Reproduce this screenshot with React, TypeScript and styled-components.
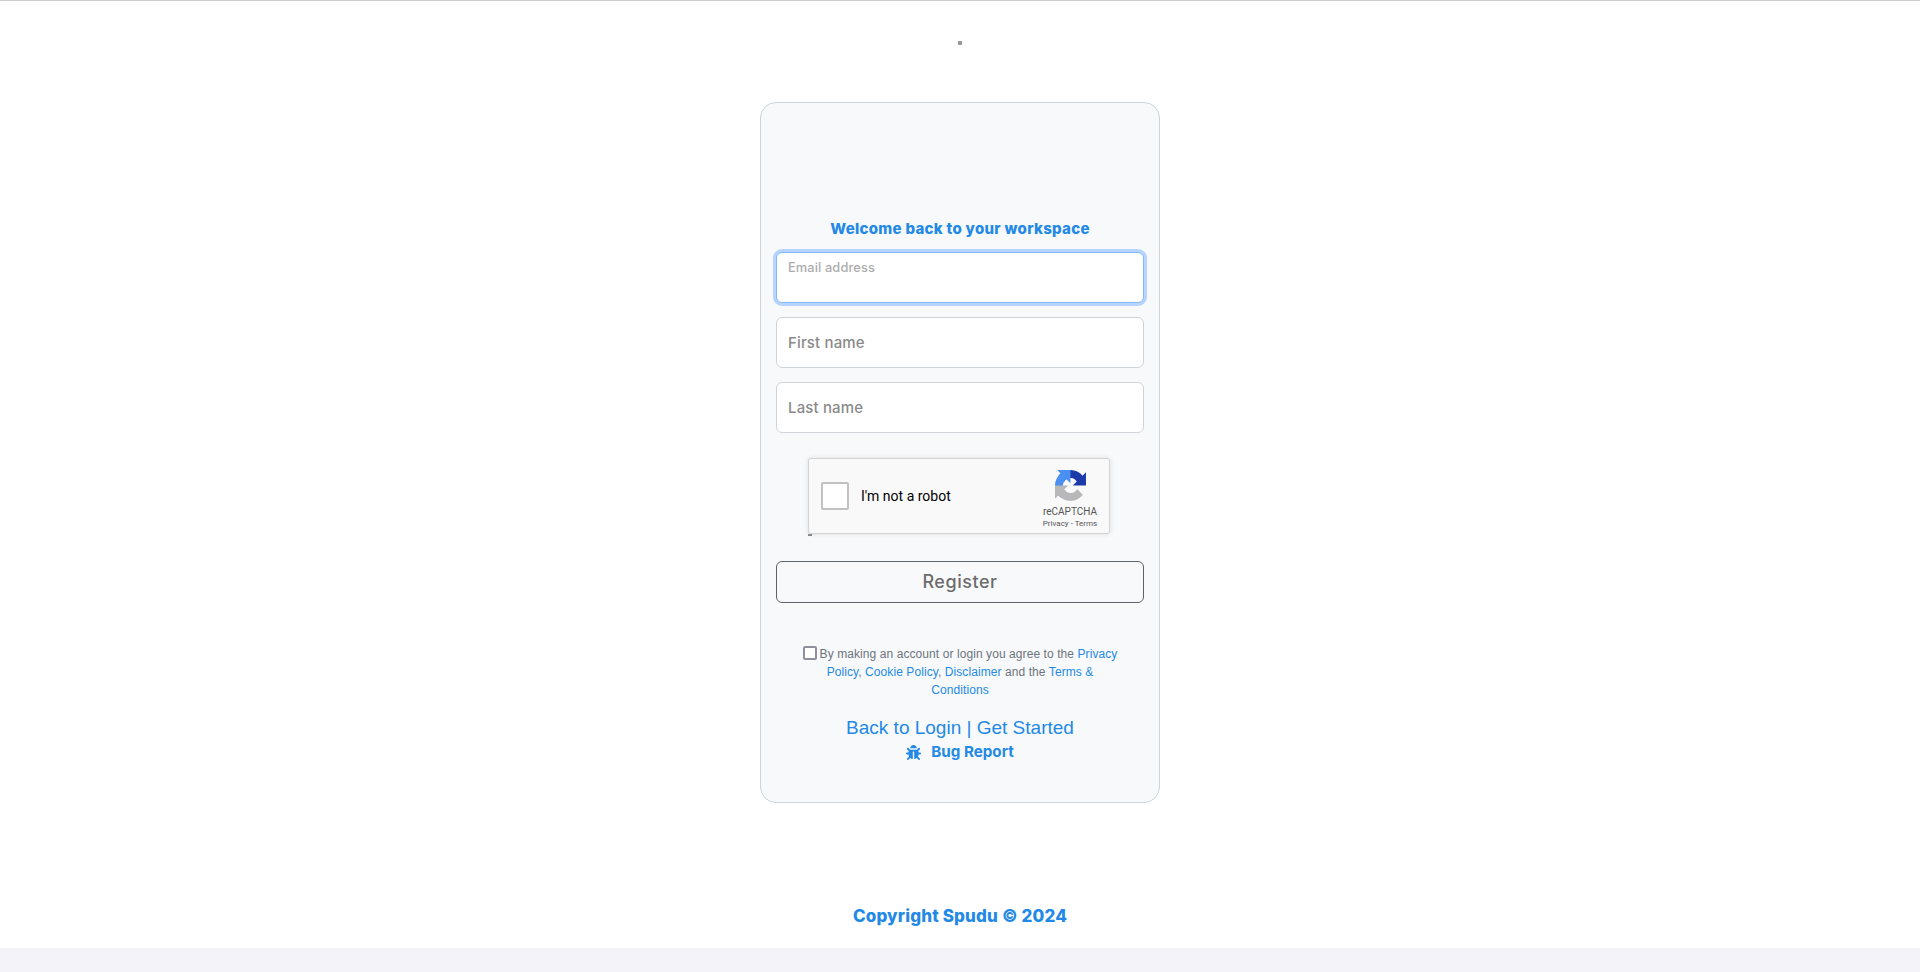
import React from "react";
import styled, { createGlobalStyle } from "styled-components";
import { FaBug } from "react-icons/fa";

const GlobalStyle = createGlobalStyle`
  html, body {
    margin: 0;
    padding: 0;
    background: #fff;
  }
  * {
    box-sizing: border-box;
  }
`;

const Page = styled.div`
  display: flex;
  flex-direction: column;
  align-items: center;
  height: 972px;
  overflow: hidden;
  border-top: 1px solid #ccc;
  font-family: "Inter", "Liberation Sans", sans-serif;
`;
const Dot = styled.div`
  width: 4px;
  height: 4px;
  margin-top: 40px;
  background: #999;
`;
const Card = styled.main`
  width: 400px;
  height: 701px;
  margin-top: 57px;
  padding: 0 15px;
  display: flex;
  flex-direction: column;
  background: #f8f9fa;
  border: 1px solid #ced4da;
  border-radius: 16px;
`;
const Title = styled.h1`
  margin: 116px 0 0;
  height: 20px;
  font-size: 15px;
  line-height: 20px;
  font-weight: 800;
  letter-spacing: 0.02em;
  text-align: center;
  color: #2389e6;
`;
const Field = styled.div`
  position: relative;
  height: 51px;
  margin-top: 14px;

  &:first-of-type {
    margin-top: 13px;
  }
`;
const Input = styled.input<{ $focused?: boolean }>`
  display: block;
  width: 100%;
  height: 100%;
  border-radius: 6px;
  background: #fff;
  outline: none;
  border: 1px solid ${(p) => (p.$focused ? "#86b7fe" : "#ced4da")};
  box-shadow: ${(p) => (p.$focused ? "0 0 0 3px #b6d4fe" : "none")};
`;
const FloatLabel = styled.label<{ $raised?: boolean }>`
  position: absolute;
  left: 12px;
  top: ${(p) => (p.$raised ? "7px" : "16px")};
  font-size: ${(p) => (p.$raised ? "12.8px" : "15px")};
  line-height: ${(p) => (p.$raised ? "17px" : "20px")};
  font-weight: 500;
  letter-spacing: 0.01em;
  color: ${(p) => (p.$raised ? "#adadad" : "#8a8a8a")};
`;
const Captcha = styled.div`
  position: relative;
  align-self: flex-start;
  width: 302px;
  height: 76px;
  margin: 25px 0 0 32px;
  padding: 0 10px 0 12px;
  display: flex;
  align-items: center;
  background: #f9f9f9;
  border: 1px solid #d3d3d3;
  border-radius: 3px;
  box-shadow: 0 0 4px 1px rgba(0, 0, 0, 0.08);
  font-family: "Roboto", "Liberation Sans", sans-serif;

  &::after {
    content: "";
    position: absolute;
    left: -1px;
    bottom: -3px;
    width: 4px;
    height: 2px;
    background: #888;
  }
`;
const CaptchaBox = styled.div`
  width: 28px;
  height: 28px;
  background: #fff;
  border: 2px solid #c1c1c1;
  border-radius: 2px;
`;
const CaptchaText = styled.span`
  margin-left: 12px;
  flex: 1;
  font-size: 14px;
  color: #000;
`;
const CaptchaBrand = styled.div`
  width: 58px;
  margin-top: 7px;
  display: flex;
  flex-direction: column;
  align-items: center;
  color: #555;
`;
const BrandName = styled.div`
  margin-top: 4px;
  font-size: 10px;
  line-height: 13px;
`;
const BrandLinks = styled.div`
  font-size: 8px;
  line-height: 11px;
  white-space: nowrap;
`;
const RegisterButton = styled.button`
  height: 42px;
  margin-top: 27px;
  padding: 0 0 2px;
  background: transparent;
  border: 1px solid #5c636a;
  border-radius: 6px;
  font-family: inherit;
  font-size: 18px;
  font-weight: 500;
  letter-spacing: 0.03em;
  color: #6c6c6c;
`;
const Terms = styled.p`
  margin: 42px 0 0;
  padding: 0 26px;
  text-align: center;
  font-family: "Liberation Sans", sans-serif;
  font-size: 12px;
  line-height: 18px;
  letter-spacing: 0.08px;
  color: #6c757d;
`;
const TermsCheck = styled.span`
  display: inline-block;
  width: 14px;
  height: 14px;
  margin-right: 3px;
  vertical-align: -2px;
  background: #fff;
  border: 2px solid #8f8f9d;
  border-radius: 2px;
`;
const TextLink = styled.a`
  color: #2389e6;
  text-decoration: none;
`;
const BackLinks = styled.div`
  margin-top: 17px;
  text-align: center;
  font-family: "Liberation Sans", sans-serif;
  font-size: 19px;
  line-height: 24px;
  color: #2389e6;
`;
const BugLink = styled.a`
  margin-top: 1px;
  display: flex;
  align-items: center;
  justify-content: center;
  gap: 10px;
  font-size: 15.2px;
  line-height: 22px;
  font-weight: 700;
  color: #2389e6;

  svg {
    width: 15px;
    height: 15px;
  }
`;
const Copyright = styled.footer`
  margin-top: 102px;
  height: 22px;
  font-size: 17px;
  line-height: 22px;
  font-weight: 800;
  letter-spacing: 0.01em;
  color: #2389e6;
`;
const Band = styled.div`
  width: 100%;
  flex: 1;
  margin-top: 21px;
  background: #f3f3f9;
`;

const RecaptchaLogo: React.FC = () => (
  <svg width="31" height="31" viewBox="0 0 64 64">
    <path
      d="M64 31.955l-.033-1.37V4.687l-7.16 7.16C50.948 4.674 42.033.093 32.05.093c-10.4 0-19.622 4.96-25.458 12.64l11.736 11.86a15.55 15.55 0 0 1 4.754-5.334c2.05-1.6 4.952-2.906 8.968-2.906.485 0 .86.057 1.135.163 4.976.393 9.29 3.14 11.83 7.125l-8.307 8.307 26.2.001"
      fill="#1c3aa9"
    />
    <path
      d="M31.862.094l-1.37.033H4.594l7.16 7.16C4.58 13.147 0 22.06 0 32.046c0 10.4 4.96 19.622 12.64 25.458l11.86-11.736a15.55 15.55 0 0 1-5.334-4.754c-1.6-2.05-2.906-4.952-2.906-8.968 0-.485.057-.86.163-1.135.393-4.976 3.14-9.29 7.125-11.83l8.307 8.307.001-26.2"
      fill="#4a90f0"
    />
    <path
      d="M.001 32.045l.033 1.37v25.898l7.16-7.16c5.86 7.173 14.774 11.754 24.76 11.754 10.4 0 19.622-4.96 25.458-12.64l-11.736-11.86a15.55 15.55 0 0 1-4.754 5.334c-2.05 1.6-4.952 2.906-8.968 2.906-.485 0-.86-.057-1.135-.163-4.976-.393-9.29-3.14-11.83-7.125l8.307-8.307-26.2-.001"
      fill="#b8b8b8"
    />
  </svg>
);

export default function App() {
  return (
    <Page>
      <GlobalStyle />
      <Dot />
      <Card>
        <Title>Welcome back to your workspace</Title>
        <Field>
          <Input id="email" $focused />
          <FloatLabel htmlFor="email" $raised>Email address</FloatLabel>
        </Field>
        <Field>
          <Input id="first" />
          <FloatLabel htmlFor="first">First name</FloatLabel>
        </Field>
        <Field>
          <Input id="last" />
          <FloatLabel htmlFor="last">Last name</FloatLabel>
        </Field>
        <Captcha>
          <CaptchaBox />
          <CaptchaText>I'm not a robot</CaptchaText>
          <CaptchaBrand>
            <RecaptchaLogo />
            <BrandName>reCAPTCHA</BrandName>
            <BrandLinks>Privacy - Terms</BrandLinks>
          </CaptchaBrand>
        </Captcha>
        <RegisterButton>Register</RegisterButton>
        <Terms>
          <TermsCheck />
          By making an account or login you agree to the <TextLink>Privacy Policy</TextLink>,{" "}
          <TextLink>Cookie Policy</TextLink>, <TextLink>Disclaimer</TextLink> and the{" "}
          <TextLink>Terms &amp; Conditions</TextLink>
        </Terms>
        <BackLinks>Back to Login | Get Started</BackLinks>
        <BugLink>
          <FaBug />
          Bug Report
        </BugLink>
      </Card>
      <Copyright>Copyright Spudu © 2024</Copyright>
      <Band />
    </Page>
  );
}
